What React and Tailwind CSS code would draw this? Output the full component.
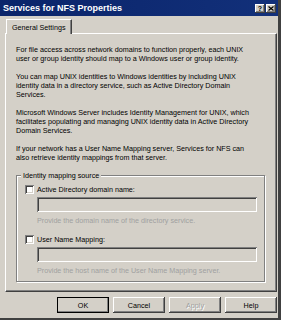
import React from 'react'

const raised = 'shadow-[inset_-1px_-1px_#404040,inset_1px_1px_#ffffff,inset_-2px_-2px_#808080,inset_2px_2px_#d4d0c8]'
const sunken = 'shadow-[inset_1px_1px_#808080,inset_-1px_-1px_#ffffff,inset_2px_2px_#404040,inset_-2px_-2px_#d4d0c8]'

function Checkbox({ label }) {
  return (
    <div className="flex items-center h-[10px]">
      <div className={`w-[9px] h-[9px] bg-white ${sunken}`} />
      <span className="ml-[3px] leading-[9px]">{label}</span>
    </div>
  )
}

function DisabledField({ hint }) {
  return (
    <div className="ml-[12px] mr-[7px]">
      <div className={`h-[15px] mt-[3px] bg-[#d4d0c8] ${sunken}`} />
      <div className="mt-[4px] leading-[9px] text-[#a0a0a0]">{hint}</div>
    </div>
  )
}

function DialogButton({ children, isDefault, disabled }) {
  return (
    <button
      type="button"
      className={`w-[52px] h-[16px] bg-[#d4d0c8] leading-[9px] ${raised} ${
        isDefault ? 'outline outline-1 outline-black -outline-offset-1' : ''
      } ${disabled ? 'text-[#a0a0a0] [text-shadow:1px_1px_#ffffff]' : 'text-black'}`}
    >
      {children}
    </button>
  )
}

export default function App() {
  return (
    <div
      className="w-[281px] h-[320px] bg-[#d4d0c8] flex flex-col text-[7.2px] text-black overflow-hidden border-r-[3px] border-b-[2px] border-r-[#404040] border-b-[#404040]"
      style={{ fontFamily: '"Liberation Sans", Arial, sans-serif' }}
    >
      {/* Title bar */}
      <div className="h-[16px] shrink-0 bg-gradient-to-r from-[#0a246a] to-[#12307a] flex items-center pl-[3px] pr-[2px]">
        <span className="text-white font-bold text-[9px] leading-none">Services for NFS Properties</span>
        <div className="ml-auto flex gap-[1px]">
          <div className={`w-[10px] h-[9px] bg-[#d4d0c8] flex items-center justify-center text-[7px] font-bold leading-none ${raised}`}>?</div>
          <div className={`w-[10px] h-[9px] bg-[#d4d0c8] flex items-center justify-center ${raised}`}>
            <svg width="6" height="5" viewBox="0 0 6 5">
              <path d="M0.5 0.5 L5.5 4.5 M5.5 0.5 L0.5 4.5" stroke="#000" strokeWidth="1.2" />
            </svg>
          </div>
        </div>
      </div>

      <div className="flex-1 flex flex-col pl-[5px] pr-[1px] pt-[3px]">
        {/* Tab */}
        <div className="flex">
          <div className="ml-[1px] w-[66px] h-[15px] pl-[5px] flex items-center border-t border-l border-white border-r border-r-[#404040] shadow-[inset_-1px_0_#808080] bg-[#d4d0c8] relative z-10 mb-[-1px]">
            <span className="leading-[9px]">General Settings</span>
          </div>
        </div>

        {/* Tab panel */}
        <div className="h-[259px] border-t border-l border-white border-r border-b border-r-[#404040] border-b-[#404040] shadow-[inset_-1px_-1px_#808080] pl-[10px] pr-[10px] pt-[11px] flex flex-col">
          <div className="leading-[9px] whitespace-nowrap flex flex-col gap-[9px]">
            <p>
              For file access across network domains to function properly, each UNIX
              <br />
              user or group identity should map to a Windows user or group identity.
            </p>
            <p>
              You can map UNIX identities to Windows identities by including UNIX
              <br />
              identity data in a directory service, such as Active Directory Domain
              <br />
              Services.
            </p>
            <p>
              Microsoft Windows Server includes Identity Management for UNIX, which
              <br />
              facilitates populating and managing UNIX identity data in Active Directory
              <br />
              Domain Services.
            </p>
            <p>
              If your network has a User Name Mapping server, Services for NFS can
              <br />
              also retrieve identity mappings from that server.
            </p>
          </div>

          {/* Group box */}
          <div className="relative mt-[13px] w-[249px] h-[107px] border border-[#808080] shadow-[1px_1px_#ffffff,inset_1px_1px_#ffffff] pt-[8px] pl-[8px] flex flex-col">
            <span className="absolute left-[4px] top-[-5px] px-[2px] bg-[#d4d0c8] leading-[9px]">Identity mapping source</span>
            <Checkbox label="Active Directory domain name:" />
            <DisabledField hint="Provide the domain name of the directory service." />
            <div className="mt-[9px]">
              <Checkbox label="User Name Mapping:" />
            </div>
            <DisabledField hint="Provide the host name of the User Name Mapping server." />
          </div>
        </div>

        {/* Buttons */}
        <div className="flex justify-end gap-[4px] mt-[5px]">
          <DialogButton isDefault>OK</DialogButton>
          <DialogButton>Cancel</DialogButton>
          <DialogButton disabled>Apply</DialogButton>
          <DialogButton>Help</DialogButton>
        </div>
      </div>
    </div>
  )
}
